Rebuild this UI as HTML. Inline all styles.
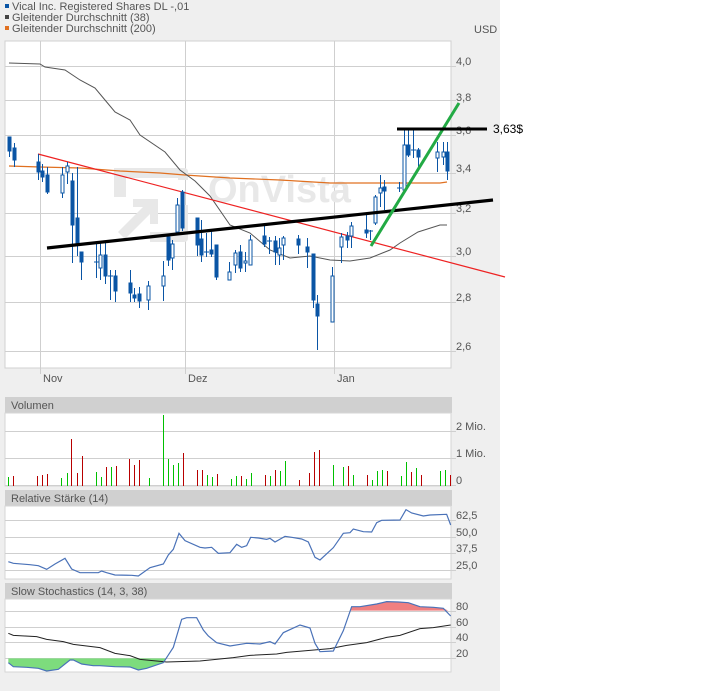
<!DOCTYPE html>
<html><head><meta charset="utf-8"><style>
html,body{margin:0;padding:0;background:#fff;}
body{width:721px;height:691px;overflow:hidden;position:relative;font-family:"Liberation Sans",sans-serif;}
svg text{font-family:"Liberation Sans",sans-serif;}
</style></head><body>
<svg width="721" height="691" viewBox="0 0 721 691" xmlns="http://www.w3.org/2000/svg">
<rect x="0" y="0" width="500" height="691" fill="#efefef"/>
<rect x="500" y="0" width="221" height="691" fill="#fff"/>
<rect x="5" y="4" width="4" height="4" fill="#0a55a5"/>
<text x="12" y="10" font-size="11" fill="#555">Vical Inc. Registered Shares DL -,01</text>
<rect x="5" y="15" width="4" height="4" fill="#444"/>
<text x="12" y="21" font-size="11" fill="#555">Gleitender Durchschnitt (38)</text>
<rect x="5" y="26" width="4" height="4" fill="#e07020"/>
<text x="12" y="32" font-size="11" fill="#555">Gleitender Durchschnitt (200)</text>
<text x="474" y="33" font-size="11" fill="#555">USD</text>

<rect x="5" y="41" width="446" height="327" fill="#fff" stroke="#d0d0d0"/>
<g stroke="#cfcfcf" stroke-width="1">
<line x1="5" y1="66.5" x2="456" y2="66.5"/><line x1="5" y1="100.5" x2="456" y2="100.5"/>
<line x1="5" y1="135.5" x2="456" y2="135.5"/><line x1="5" y1="173.5" x2="456" y2="173.5"/>
<line x1="5" y1="213.5" x2="456" y2="213.5"/><line x1="5" y1="256.5" x2="456" y2="256.5"/>
<line x1="5" y1="302.5" x2="456" y2="302.5"/><line x1="5" y1="351.5" x2="456" y2="351.5"/>
<line x1="40.5" y1="41" x2="40.5" y2="374"/><line x1="185.5" y1="41" x2="185.5" y2="374"/><line x1="334.5" y1="41" x2="334.5" y2="374"/>
</g>
<g font-size="11" fill="#555">
<text x="456" y="65">4,0</text><text x="456" y="101">3,8</text><text x="456" y="134">3,6</text>
<text x="456" y="172">3,4</text><text x="456" y="212">3,2</text><text x="456" y="255">3,0</text>
<text x="456" y="301">2,8</text><text x="456" y="350">2,6</text>
<text x="43" y="382">Nov</text><text x="188" y="382">Dez</text><text x="337" y="382">Jan</text>
</g>
<g fill="#e8e8e8">
<path d="M114 168 H184 Q188 168 188 172 V180 H178 V178 H126 V197 H114 Z"/>
<path d="M178 205 H188 V238 Q188 242 184 242 H150 V232 H178 Z"/>
<path d="M118 232 L143 207 L133 207 L133 199 L158 199 L158 224 L150 224 L150 214 L125 239 Z"/>
<text x="208" y="202" font-size="38" font-weight="bold" fill="#e8e8e8">OnVista</text>
</g>
<polyline fill="none" stroke="#e07020" stroke-width="1.2" points="9,166 40,167 80,168 120,171 160,173 185,175 230,178 280,180 330,183 440,183 447,182"/>
<polyline fill="none" stroke="#555" stroke-width="1" points="9,63 40,64 45,67 65,70 80,80 95,88 105,100 115,112 130,120 140,135 165,152 180,170 195,181 210,196 230,225 250,233 270,250 290,258 310,256 330,260 350,261 370,258 390,250 400,243 418,232 440,225 447,225"/>
<line x1="38" y1="154" x2="505" y2="277" stroke="#ee2222" stroke-width="1.2"/>
<g stroke="#0a55a5" stroke-width="1" fill="#0a55a5">
<line x1="9.5" y1="137" x2="9.5" y2="157"/><rect x="8" y="137" width="3" height="14"/>
<line x1="14.5" y1="143" x2="14.5" y2="167"/><rect x="13" y="148" width="3" height="12"/>
<line x1="38.5" y1="154" x2="38.5" y2="180"/><rect x="37" y="162" width="3" height="10"/>
<line x1="42.5" y1="164" x2="42.5" y2="182"/><rect x="41" y="171" width="3" height="6"/>
<line x1="47.5" y1="167" x2="47.5" y2="194"/><rect x="46" y="175" width="3" height="17"/>
<line x1="62.5" y1="167" x2="62.5" y2="198"/><rect x="61" y="175" width="3" height="18" fill="#fff"/>
<line x1="67.5" y1="162" x2="67.5" y2="184"/><rect x="66" y="166" width="3" height="6" fill="#fff"/>
<line x1="72.5" y1="173" x2="72.5" y2="263"/><rect x="71" y="181" width="3" height="44"/>
<line x1="77.5" y1="167" x2="77.5" y2="256"/><rect x="76" y="218" width="3" height="27"/>
<line x1="81.5" y1="252" x2="81.5" y2="280"/><rect x="80" y="252" width="3" height="10"/>
<line x1="96.5" y1="243" x2="96.5" y2="278"/><line x1="94" y1="262" x2="99" y2="262"/>
<line x1="100.5" y1="243" x2="100.5" y2="280"/><rect x="99" y="255" width="3" height="13" fill="#fff"/>
<line x1="105.5" y1="243" x2="105.5" y2="284"/><rect x="104" y="255" width="3" height="21"/>
<line x1="110.5" y1="270" x2="110.5" y2="300"/><line x1="108" y1="276" x2="113" y2="276"/>
<line x1="115.5" y1="270" x2="115.5" y2="302"/><rect x="114" y="276" width="3" height="15"/>
<line x1="130.5" y1="270" x2="130.5" y2="302"/><rect x="129" y="283" width="3" height="10"/>
<line x1="134.5" y1="288" x2="134.5" y2="302"/><rect x="133" y="295" width="3" height="3"/>
<line x1="139.5" y1="287" x2="139.5" y2="308"/><rect x="138" y="294" width="3" height="7"/>
<line x1="148.5" y1="281" x2="148.5" y2="310"/><rect x="147" y="286" width="3" height="14" fill="#fff"/>
<line x1="163.5" y1="261" x2="163.5" y2="301"/><rect x="162" y="276" width="3" height="10" fill="#fff"/>
<line x1="168.5" y1="234" x2="168.5" y2="266"/><rect x="167" y="237" width="3" height="23"/>
<line x1="172.5" y1="240" x2="172.5" y2="270"/><rect x="171" y="244" width="3" height="14" fill="#fff"/>
<line x1="177.5" y1="198" x2="177.5" y2="235"/><rect x="176" y="205" width="3" height="27" fill="#fff"/>
<line x1="182.5" y1="190" x2="182.5" y2="231"/><rect x="181" y="192" width="3" height="36"/>
<line x1="197.5" y1="218" x2="197.5" y2="256"/><rect x="196" y="218" width="3" height="27"/>
<line x1="201.5" y1="220" x2="201.5" y2="262"/><rect x="200" y="239" width="3" height="16"/>
<line x1="206.5" y1="233" x2="206.5" y2="257"/><line x1="204" y1="252" x2="209" y2="252"/>
<line x1="211.5" y1="230" x2="211.5" y2="257"/><rect x="210" y="250" width="3" height="4"/>
<line x1="216.5" y1="245" x2="216.5" y2="280"/><rect x="215" y="245" width="3" height="32"/>
<line x1="229.5" y1="262" x2="229.5" y2="280"/><rect x="228" y="272" width="3" height="8" fill="#fff"/>
<line x1="235.5" y1="250" x2="235.5" y2="273"/><rect x="234" y="253" width="3" height="12" fill="#fff"/>
<line x1="240.5" y1="245" x2="240.5" y2="272"/><rect x="239" y="252" width="3" height="16"/>
<line x1="245.5" y1="252" x2="245.5" y2="272"/><rect x="244" y="261" width="3" height="2" fill="#fff"/>
<line x1="250.5" y1="235" x2="250.5" y2="265"/><rect x="249" y="240" width="3" height="25" fill="#fff"/>
<line x1="264.5" y1="225" x2="264.5" y2="247"/><rect x="263" y="236" width="3" height="8"/>
<line x1="269.5" y1="237" x2="269.5" y2="254"/><line x1="267" y1="241" x2="272" y2="241"/>
<line x1="275.5" y1="236" x2="275.5" y2="265"/><rect x="274" y="241" width="3" height="11"/>
<line x1="279.5" y1="238" x2="279.5" y2="265"/><rect x="278" y="248" width="3" height="7" fill="#fff"/>
<line x1="283.5" y1="236" x2="283.5" y2="260"/><rect x="282" y="238" width="3" height="7" fill="#fff"/>
<line x1="298.5" y1="235" x2="298.5" y2="254"/><rect x="297" y="239" width="3" height="6"/>
<line x1="307.5" y1="238" x2="307.5" y2="268"/><rect x="306" y="247" width="3" height="5"/>
<line x1="313.5" y1="254" x2="313.5" y2="308"/><rect x="312" y="254" width="3" height="46"/>
<line x1="317.5" y1="295" x2="317.5" y2="350"/><rect x="316" y="304" width="3" height="12"/>
<line x1="332.5" y1="267" x2="332.5" y2="322"/><rect x="331" y="276" width="3" height="46" fill="#fff"/>
<line x1="341.5" y1="233" x2="341.5" y2="263"/><rect x="340" y="237" width="3" height="10" fill="#fff"/>
<line x1="347.5" y1="232" x2="347.5" y2="248"/><rect x="346" y="236" width="3" height="4"/>
<line x1="351.5" y1="222" x2="351.5" y2="248"/><rect x="350" y="226" width="3" height="10" fill="#fff"/>
<line x1="366.5" y1="213" x2="366.5" y2="238"/><rect x="365" y="230" width="3" height="3"/>
<line x1="370.5" y1="230" x2="370.5" y2="240"/><line x1="368" y1="231" x2="373" y2="231"/>
<line x1="375.5" y1="195" x2="375.5" y2="225"/><rect x="374" y="197" width="3" height="26" fill="#fff"/>
<line x1="380.5" y1="175" x2="380.5" y2="207"/><rect x="379" y="188" width="3" height="5" fill="#fff"/>
<line x1="384.5" y1="180" x2="384.5" y2="210"/><rect x="383" y="187" width="3" height="4"/>
<line x1="399.5" y1="182" x2="399.5" y2="192"/><line x1="397" y1="188" x2="402" y2="188"/>
<line x1="404.5" y1="130" x2="404.5" y2="190"/><rect x="403" y="145" width="3" height="45" fill="#fff"/>
<line x1="408.5" y1="130" x2="408.5" y2="157"/><rect x="407" y="145" width="3" height="10"/>
<line x1="413.5" y1="130" x2="413.5" y2="158"/><line x1="411" y1="150" x2="416" y2="150"/>
<line x1="418.5" y1="148" x2="418.5" y2="168"/><rect x="417" y="150" width="3" height="7"/>
<line x1="437.5" y1="142" x2="437.5" y2="172"/><rect x="436" y="152" width="3" height="6" fill="#fff"/>
<line x1="443.5" y1="142" x2="443.5" y2="165"/><rect x="442" y="152" width="3" height="5" fill="#fff"/>
<line x1="447.5" y1="142" x2="447.5" y2="180"/><rect x="446" y="152" width="3" height="19"/>
</g>
<line x1="47" y1="248" x2="493" y2="200" stroke="#000" stroke-width="3.2"/>
<line x1="371" y1="246" x2="459" y2="103" stroke="#22aa44" stroke-width="3"/>
<line x1="397" y1="129" x2="487" y2="129" stroke="#000" stroke-width="3"/>
<text x="493" y="133" font-size="12" fill="#000">3,63$</text>

<rect x="5" y="397" width="447" height="16" fill="#d0d0d0"/>
<text x="11" y="409" font-size="11" fill="#555">Volumen</text>
<rect x="5" y="413" width="446" height="73" fill="#fff" stroke="#d6d6d6"/>
<g stroke="#cfcfcf"><line x1="5" y1="431.5" x2="456" y2="431.5"/><line x1="5" y1="458.5" x2="456" y2="458.5"/><line x1="5" y1="485.5" x2="456" y2="485.5"/></g>
<g font-size="11" fill="#555"><text x="456" y="430">2 Mio.</text><text x="456" y="457">1 Mio.</text><text x="456" y="484">0</text></g>
<g stroke-width="1" shape-rendering="crispEdges">
<g stroke="#00c000">
<line x1="8.5" y1="477" x2="8.5" y2="486"/><line x1="61.5" y1="478" x2="61.5" y2="486"/><line x1="67.5" y1="473" x2="67.5" y2="486"/>
<line x1="96.5" y1="472" x2="96.5" y2="486"/><line x1="101.5" y1="477" x2="101.5" y2="486"/><line x1="111.5" y1="467" x2="111.5" y2="486"/>
<line x1="149.5" y1="478" x2="149.5" y2="486"/><line x1="163.5" y1="415" x2="163.5" y2="486"/><line x1="168.5" y1="459" x2="168.5" y2="486"/>
<line x1="173.5" y1="465" x2="173.5" y2="486"/><line x1="178.5" y1="463" x2="178.5" y2="486"/><line x1="207.5" y1="475" x2="207.5" y2="486"/>
<line x1="212.5" y1="477" x2="212.5" y2="486"/><line x1="231.5" y1="479" x2="231.5" y2="486"/><line x1="236.5" y1="476" x2="236.5" y2="486"/>
<line x1="246.5" y1="479" x2="246.5" y2="486"/><line x1="251.5" y1="473" x2="251.5" y2="486"/><line x1="270.5" y1="476" x2="270.5" y2="486"/>
<line x1="280.5" y1="471" x2="280.5" y2="486"/><line x1="285.5" y1="461" x2="285.5" y2="486"/><line x1="333.5" y1="465" x2="333.5" y2="486"/>
<line x1="343.5" y1="467" x2="343.5" y2="486"/><line x1="353.5" y1="475" x2="353.5" y2="486"/><line x1="372.5" y1="480" x2="372.5" y2="486"/>
<line x1="377.5" y1="471" x2="377.5" y2="486"/><line x1="382.5" y1="470" x2="382.5" y2="486"/><line x1="401.5" y1="476" x2="401.5" y2="486"/>
<line x1="406.5" y1="462" x2="406.5" y2="486"/><line x1="416.5" y1="468" x2="416.5" y2="486"/><line x1="440.5" y1="471" x2="440.5" y2="486"/>
<line x1="445.5" y1="470" x2="445.5" y2="486"/>
</g>
<g stroke="#b80000">
<line x1="13.5" y1="476" x2="13.5" y2="486"/><line x1="37.5" y1="476" x2="37.5" y2="486"/><line x1="42.5" y1="475" x2="42.5" y2="486"/>
<line x1="47.5" y1="474" x2="47.5" y2="486"/><line x1="71.5" y1="439" x2="71.5" y2="486"/><line x1="77.5" y1="473" x2="77.5" y2="486"/>
<line x1="82.5" y1="456" x2="82.5" y2="486"/><line x1="106.5" y1="467" x2="106.5" y2="486"/><line x1="116.5" y1="466" x2="116.5" y2="486"/>
<line x1="129.5" y1="459" x2="129.5" y2="486"/><line x1="134.5" y1="465" x2="134.5" y2="486"/><line x1="139.5" y1="460" x2="139.5" y2="486"/>
<line x1="183.5" y1="453" x2="183.5" y2="486"/><line x1="197.5" y1="470" x2="197.5" y2="486"/><line x1="202.5" y1="470" x2="202.5" y2="486"/>
<line x1="217.5" y1="474" x2="217.5" y2="486"/><line x1="241.5" y1="476" x2="241.5" y2="486"/><line x1="265.5" y1="475" x2="265.5" y2="486"/>
<line x1="275.5" y1="470" x2="275.5" y2="486"/><line x1="299.5" y1="480" x2="299.5" y2="486"/><line x1="309.5" y1="473" x2="309.5" y2="486"/>
<line x1="314.5" y1="452" x2="314.5" y2="486"/><line x1="319.5" y1="450" x2="319.5" y2="486"/><line x1="348.5" y1="466" x2="348.5" y2="486"/>
<line x1="367.5" y1="475" x2="367.5" y2="486"/><line x1="387.5" y1="471" x2="387.5" y2="486"/><line x1="411.5" y1="472" x2="411.5" y2="486"/>
<line x1="421.5" y1="475" x2="421.5" y2="486"/><line x1="450.5" y1="475" x2="450.5" y2="486"/>
</g></g>

<rect x="5" y="490" width="447" height="16" fill="#d0d0d0"/>
<text x="11" y="502" font-size="11" fill="#555">Relative Stärke (14)</text>
<rect x="5" y="506" width="446" height="73" fill="#fff" stroke="#d6d6d6"/>
<g stroke="#cfcfcf"><line x1="5" y1="520.5" x2="456" y2="520.5"/><line x1="5" y1="537.5" x2="456" y2="537.5"/><line x1="5" y1="553.5" x2="456" y2="553.5"/><line x1="5" y1="570.5" x2="456" y2="570.5"/></g>
<g font-size="11" fill="#555"><text x="456" y="519">62,5</text><text x="456" y="536">50,0</text><text x="456" y="552">37,5</text><text x="456" y="569">25,0</text></g>
<g transform="translate(0,360) scale(0.33333)">
<polyline fill="none" stroke="#4a72b8" stroke-width="1.2" vector-effect="non-scaling-stroke" points="25,605 40,610 90,614 115,617 140,628 165,612 195,595 215,627 240,638 295,638 305,633 320,638 345,645 395,646 415,648 450,623 490,612 505,585 520,568 537,520 555,542 600,562 615,564 635,562 655,580 690,578 710,553 725,562 740,557 752,532 775,534 800,538 810,535 825,546 855,529 875,532 905,537 925,546 945,592 960,600 1000,563 1030,520 1050,518 1060,507 1090,515 1115,516 1130,488 1145,481 1200,480 1218,449 1235,459 1270,468 1290,465 1340,463 1352,495"/>
</g>

<rect x="5" y="583" width="447" height="16" fill="#d0d0d0"/>
<text x="11" y="595" font-size="11" fill="#555">Slow Stochastics (14, 3, 38)</text>
<rect x="5" y="599" width="446" height="73" fill="#fff" stroke="#d6d6d6"/>
<g stroke="#cfcfcf"><line x1="5" y1="611.5" x2="456" y2="611.5"/><line x1="5" y1="627.5" x2="456" y2="627.5"/><line x1="5" y1="642.5" x2="456" y2="642.5"/><line x1="5" y1="658.5" x2="456" y2="658.5"/></g>
<g font-size="11" fill="#555"><text x="456" y="610">80</text><text x="456" y="626">60</text><text x="456" y="641">40</text><text x="456" y="657">20</text></g>
<g transform="translate(0,360) scale(0.33333)">
<polygon fill="#7ddc7d" points="25,895 25,908 40,920 80,922 115,925 140,933 175,928 210,900 220,900 245,912 280,917 300,917 345,920 390,921 415,930 440,925 490,908 497,895"/>
<polygon fill="#f08080" points="1052,752 1055,740 1080,740 1130,732 1160,725 1195,726 1225,728 1260,740 1300,742 1330,745 1345,752"/>
<polyline fill="none" stroke="#222" stroke-width="1" vector-effect="non-scaling-stroke" points="25,820 40,826 110,830 140,838 190,845 220,853 300,863 345,880 390,887 420,898 500,906 600,903 700,893 750,886 830,882 860,877 990,866 1040,856 1100,848 1160,832 1200,826 1260,806 1300,803 1352,795"/>
<polyline fill="none" stroke="#4a72b8" stroke-width="1.2" vector-effect="non-scaling-stroke" points="25,908 40,920 80,922 115,925 140,933 175,928 210,900 220,900 245,912 280,917 300,917 345,920 390,921 415,930 440,925 490,908 520,862 545,778 560,773 590,773 610,810 625,828 650,848 690,858 740,850 780,852 810,845 825,852 850,818 900,795 930,804 945,850 960,875 1000,873 1030,812 1055,740 1080,740 1130,732 1160,725 1195,726 1225,728 1260,740 1300,742 1330,745 1352,768"/>
</g>
</svg>
</body></html>
